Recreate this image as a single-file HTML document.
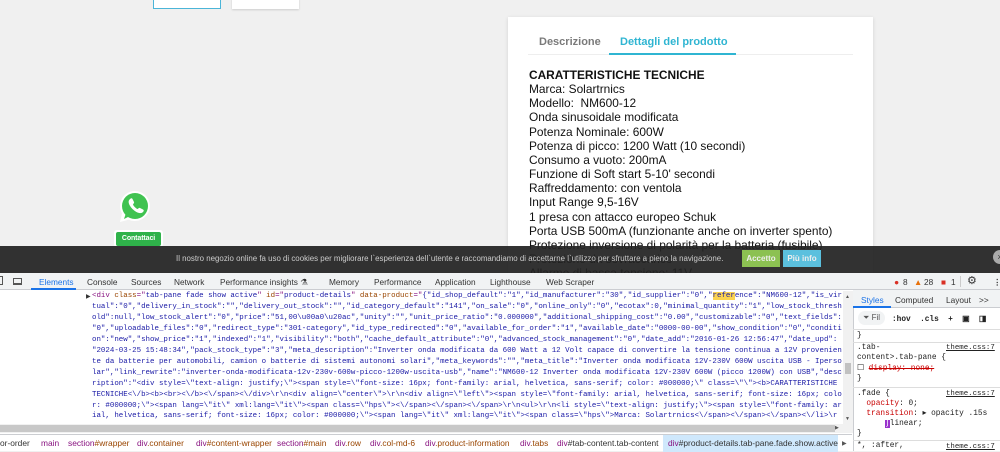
<!DOCTYPE html>
<html><head><meta charset="utf-8"><style>
*{margin:0;padding:0;box-sizing:border-box}
body{width:1000px;height:451px;overflow:hidden;background:#f0f0f0;font-family:"Liberation Sans",sans-serif;position:relative}
.abs{position:absolute}
.card{left:508px;top:17px;width:365px;height:260px;background:#fff;box-shadow:0 1px 4px rgba(0,0,0,.12)}
.tab{font-size:11px;font-weight:bold;top:36px}
.ct{left:529px;font-size:11.9px;color:#111;line-height:14.15px;top:68px}
.cookie{left:0;top:246px;width:1000px;height:27px;background:rgba(34,34,34,.93)}
.dt{left:0;top:273px;width:1000px;height:178px;background:#fff}
.tb{left:0;top:273px;width:1000px;height:17px;background:#f1f3f4;border-bottom:1px solid #cbcdd1;font-size:8.3px;color:#333}
.tb span{position:absolute;top:4px}
.code{left:92px;top:291px;width:751px;font-family:"Liberation Mono",monospace;font-size:7.45px;line-height:10.95px;color:#1a1aa6;white-space:pre;overflow:hidden}
.st{font-family:"Liberation Mono",monospace;font-size:7.8px;color:#222;white-space:pre}
.th{position:absolute;left:946px;font-family:"Liberation Mono",monospace;font-size:7.4px;color:#222;text-decoration:underline}
.bc{left:0;top:434px;width:852px;height:17px;border-top:1px solid #cbcdd1;background:#fff;font-size:8.4px;white-space:nowrap}
.bc span{position:absolute;top:3px}
.t{color:#881280}.c{color:#994500}
</style></head><body>
<div class="abs" style="left:153px;top:-2px;width:68px;height:11px;background:#fff;border:1px solid #4bb5d8"></div>
<div class="abs" style="left:232px;top:-2px;width:67px;height:11px;background:#fff;box-shadow:0 1px 2px rgba(0,0,0,.15)"></div>

<div class="abs card"></div>
<div class="abs tab" style="left:539px;color:#7a7a7a">Descrizione</div>
<div class="abs tab" style="left:620px;color:#2fb5d2">Dettagli del prodotto</div>
<div class="abs" style="left:528px;top:54px;width:325px;height:1px;background:#eee"></div>
<div class="abs" style="left:609px;top:53px;width:127px;height:2px;background:#2fb5d2"></div>
<div class="abs ct"><b>CARATTERISTICHE TECNICHE</b><br>Marca: Solartrnics<br>Modello:&nbsp; NM600-12<br>Onda sinusoidale modificata<br>Potenza Nominale: 600W<br>Potenza di picco: 1200 Watt (10 secondi)<br>Consumo a vuoto: 200mA<br>Funzione di Soft start 5-10' secondi<br>Raffreddamento: con ventola<br>Input Range 9,5-16V<br>1 presa con attacco europeo Schuk<br>Porta USB 500mA (funzionante anche on inverter spento)<br>Protezione inversione di polarità per la batteria (fusibile)<br>Protezione da sovraccarico<br>Allarme di bassa tensione: 11V</div>

<svg class="abs" style="left:117px;top:189px" width="36" height="36" viewBox="0 0 36 36"><path d="M18 2a15 15 0 0 0-13 22.5L3 33l8.8-2.3A15 15 0 1 0 18 2z" fill="#fff"/><circle cx="18" cy="17" r="13" fill="#40c351"/><path d="M7 30l2-6 4 3z" fill="#40c351"/><path d="M13 10c1-1 2-1 2.5 0l1.5 3c.3.7 0 1.2-.6 1.8-.5.5-.4 1 0 1.6a10 10 0 0 0 3.2 3.2c.6.4 1.1.5 1.6 0 .6-.6 1.1-.9 1.8-.6l3 1.5c1 .5 1 1.5 0 2.5-1.5 1.5-4 1.5-7-.3a17 17 0 0 1-6.3-6.3C11 13 11.5 11.5 13 10z" fill="#fff"/></svg>
<div class="abs" style="left:114px;top:230px;width:49px;height:17px;background:#fff;border-radius:3px"></div>
<div class="abs" style="left:116px;top:232px;width:45px;height:14px;background:#2fb24a;border-radius:2px;color:#fff;font-size:7px;font-weight:bold;text-align:center;line-height:14px;letter-spacing:-0.1px">Contattaci</div>

<div class="abs cookie"></div>
<div class="abs" style="left:176px;top:254px;font-size:7.9px;color:#ccc;white-space:nowrap">Il nostro negozio online fa uso di cookies per migliorare l`esperienza dell`utente e raccomandiamo di accettarne l`utilizzo per sfruttare a pieno la navigazione.</div>
<div class="abs" style="left:742px;top:250px;width:38px;height:17px;background:#8cc152;color:#eee;font-size:8px;font-weight:bold;text-align:center;line-height:17px">Accetto</div>
<div class="abs" style="left:783px;top:250px;width:38px;height:17px;background:#5bc0de;color:#eee;font-size:8px;font-weight:bold;text-align:center;line-height:17px">Più info</div>
<div class="abs" style="left:993px;top:250px;width:14px;height:14px;border-radius:50%;background:#aaa;color:#333;font-size:9px;text-align:center;line-height:14px">×</div>

<div class="abs dt"></div>
<div class="abs tb">
<span style="left:-3px;top:3px;width:6px;height:9px;border:1px solid #555"></span>
<span style="left:13px;top:5px;width:9px;height:7px;border:1px solid #555;border-bottom-width:2px"></span>
<span style="left:39px;color:#1a73e8">Elements</span>
<span style="left:31px;top:15px;width:45px;height:2px;background:#1a73e8"></span>
<span style="left:87px">Console</span><span style="left:131px">Sources</span><span style="left:174px">Network</span><span style="left:220px">Performance insights ⚗</span><span style="left:329px">Memory</span><span style="left:374px">Performance</span><span style="left:435px">Application</span><span style="left:490px">Lighthouse</span><span style="left:546px">Web Scraper</span>
<span style="left:894px;color:#d93025">●</span><span style="left:903px">8</span>
<span style="left:914px;color:#e8710a">▲</span><span style="left:924px">28</span>
<span style="left:941px;color:#d93025">■</span><span style="left:951px">1</span>
<span style="left:960px;top:3px;width:1px;height:11px;background:#ccc"></span>
<span style="left:967px;top:1px;font-size:11px">⚙</span>
<span style="left:993px;font-weight:bold">⋮</span>
</div>
<div class="abs" style="left:86px;top:293px;font-size:6px;color:#333">▶</div>
<div class="abs code"><span class="t">&lt;div</span> <span class="c">class</span><span class="t">="</span>tab-pane fade show active<span class="t">"</span> <span class="c">id</span><span class="t">="</span>product-details<span class="t">"</span> <span class="c">data-product</span><span class="t">="</span>{"id_shop_default":"1","id_manufacturer":"30","id_supplier":"0","<span style="background:#fbd34f">refer</span>ence":"NM600-12","is_vir
tual":"0","delivery_in_stock":"","delivery_out_stock":"","id_category_default":"141","on_sale":"0","online_only":"0","ecotax":0,"minimal_quantity":"1","low_stock_thresh
old":null,"low_stock_alert":"0","price":"51,00\u00a0\u20ac","unity":"","unit_price_ratio":"0.000000","additional_shipping_cost":"0.00","customizable":"0","text_fields":
"0","uploadable_files":"0","redirect_type":"301-category","id_type_redirected":"0","available_for_order":"1","available_date":"0000-00-00","show_condition":"0","conditi
on":"new","show_price":"1","indexed":"1","visibility":"both","cache_default_attribute":"0","advanced_stock_management":"0","date_add":"2016-01-26 12:56:47","date_upd":
"2024-03-25 15:48:34","pack_stock_type":"3","meta_description":"Inverter onda modificata da 600 Watt a 12 Volt capace di convertire la tensione continua a 12V provenien
te da batterie per automobili, camion o batterie di sistemi autonomi solari","meta_keywords":"","meta_title":"Inverter onda modificata 12V-230V 600W uscita USB - Iperso
lar","link_rewrite":"inverter-onda-modificata-12v-230v-600w-picco-1200w-uscita-usb","name":"NM600-12 Inverter onda modificata 12V-230V 600W (picco 1200W) con USB","desc
ription":"&lt;div style=\"text-align: justify;\"&gt;&lt;span style=\"font-size: 16px; font-family: arial, helvetica, sans-serif; color: #000000;\" class=\"\"&gt;&lt;b&gt;CARATTERISTICHE
TECNICHE&lt;\/b&gt;&lt;b&gt;&lt;br&gt;&lt;\/b&gt;&lt;\/span&gt;&lt;\/div&gt;\r\n&lt;div align=\"center\"&gt;\r\n&lt;div align=\"left\"&gt;&lt;span style=\"font-family: arial, helvetica, sans-serif; font-size: 16px; colo
r: #000000;\"&gt;&lt;span lang=\"it\" xml:lang=\"it\"&gt;&lt;span class=\"hps\"&gt;&lt;\/span&gt;&lt;\/span&gt;&lt;\/span&gt;\r\n&lt;ul&gt;\r\n&lt;li style=\"text-align: justify;\"&gt;&lt;span style=\"font-family: ar
ial, helvetica, sans-serif; font-size: 16px; color: #000000;\"&gt;&lt;span lang=\"it\" xml:lang=\"it\"&gt;&lt;span class=\"hps\"&gt;Marca: Solartrnics&lt;\/span&gt;&lt;\/span&gt;&lt;\/span&gt;&lt;\/li&gt;\r</div>
<div class="abs" style="left:843px;top:291px;width:10px;height:134px;background:#f1f1f1"></div>
<div class="abs" style="left:845px;top:294px;font-size:5px;color:#555">▲</div>
<div class="abs" style="left:845px;top:363px;width:6px;height:11px;background:#c1c1c1"></div>
<div class="abs" style="left:845px;top:416px;font-size:5px;color:#555">▼</div>
<div class="abs" style="left:0;top:424px;width:853px;height:9px;background:#f1f1f1"></div>
<div class="abs" style="left:0;top:425px;width:835px;height:7px;background:#c8c8c8"></div>
<div class="abs" style="left:835px;top:425px;font-size:5px;color:#555">▶</div>

<div class="abs bc">
<span style="left:0;color:#333">or-order</span>
<span style="left:41px" class="t">main</span>
<span style="left:68px"><span class="t" style="position:static">section</span><span class="c" style="position:static">#wrapper</span></span>
<span style="left:137px"><span class="t" style="position:static">div</span><span class="c" style="position:static">.container</span></span>
<span style="left:196px"><span class="t" style="position:static">div</span><span class="c" style="position:static">#content-wrapper</span></span>
<span style="left:277px"><span class="t" style="position:static">section</span><span class="c" style="position:static">#main</span></span>
<span style="left:335px"><span class="t" style="position:static">div</span><span class="c" style="position:static">.row</span></span>
<span style="left:370px"><span class="t" style="position:static">div</span><span class="c" style="position:static">.col-md-6</span></span>
<span style="left:425px"><span class="t" style="position:static">div</span><span class="c" style="position:static">.product-information</span></span>
<span style="left:520px"><span class="t" style="position:static">div</span><span class="c" style="position:static">.tabs</span></span>
<span style="left:557px"><span class="t" style="position:static">div</span><span style="position:static;color:#333">#tab-content.tab-content</span></span>
<span style="left:663px;top:0;width:175px;height:17px;background:#cfe8fc"></span>
<span style="left:668px"><span class="t" style="position:static">div</span><span style="position:static;color:#333">#product-details.tab-pane.fade.show.active</span></span>
<span style="left:842px;font-size:6px;top:5px;color:#555">▶</span>
</div>

<div class="abs" style="left:853px;top:290px;width:147px;height:161px;background:#fff;border-left:1px solid #cbcdd1"></div>
<div class="abs" style="left:853px;top:290px;width:147px;height:18px;background:#f1f3f4;border-bottom:1px solid #cbcdd1;font-size:8.3px;color:#333">
<span class="abs" style="left:8px;top:5px;color:#1a73e8">Styles</span><span class="abs" style="left:42px;top:5px">Computed</span><span class="abs" style="left:93px;top:5px">Layout</span><span class="abs" style="left:126px;top:5px">&gt;&gt;</span>
<span class="abs" style="left:0;top:16px;width:38px;height:2px;background:#1a73e8"></span></div>
<div class="abs" style="left:858px;top:311px;width:27px;height:14px;border-radius:7px;background:#f1f3f4;font-size:8px;color:#555;line-height:14px;padding-left:5px">⏷ Fil</div>
<div class="abs st" style="left:892px;top:314px;font-weight:bold">:hov  .cls  +  ▣  ◨</div>
<div class="abs" style="left:853px;top:329px;width:147px;height:1px;background:#ddd"></div>
<div class="abs st" style="left:857px;top:331px;line-height:10.3px">}</div>
<div class="abs" style="left:853px;top:342px;width:147px;height:1px;background:#ddd"></div>
<div class="abs st" style="left:857px;top:343px;line-height:10.3px">.tab-
content&gt;.tab-pane {
☐ <s style="color:#c80000">display: none;</s>
}</div>
<div class="th" style="top:344px">theme.css:7</div>
<div class="abs" style="left:853px;top:387px;width:147px;height:1px;background:#ddd"></div>
<div class="abs st" style="left:857px;top:389px;line-height:10px">.fade {
  <span style="color:#c80000">opacity</span>: 0;
  <span style="color:#c80000">transition</span>: ▸ opacity .15s
      <span style="background:#9933cc;color:#fff">∫</span>linear;
}</div>
<div class="th" style="top:390px">theme.css:7</div>
<div class="abs" style="left:853px;top:440px;width:147px;height:1px;background:#ddd"></div>
<div class="abs st" style="left:857px;top:442px">*, :after,</div>
<div class="th" style="top:443px">theme.css:7</div>
</body></html>
